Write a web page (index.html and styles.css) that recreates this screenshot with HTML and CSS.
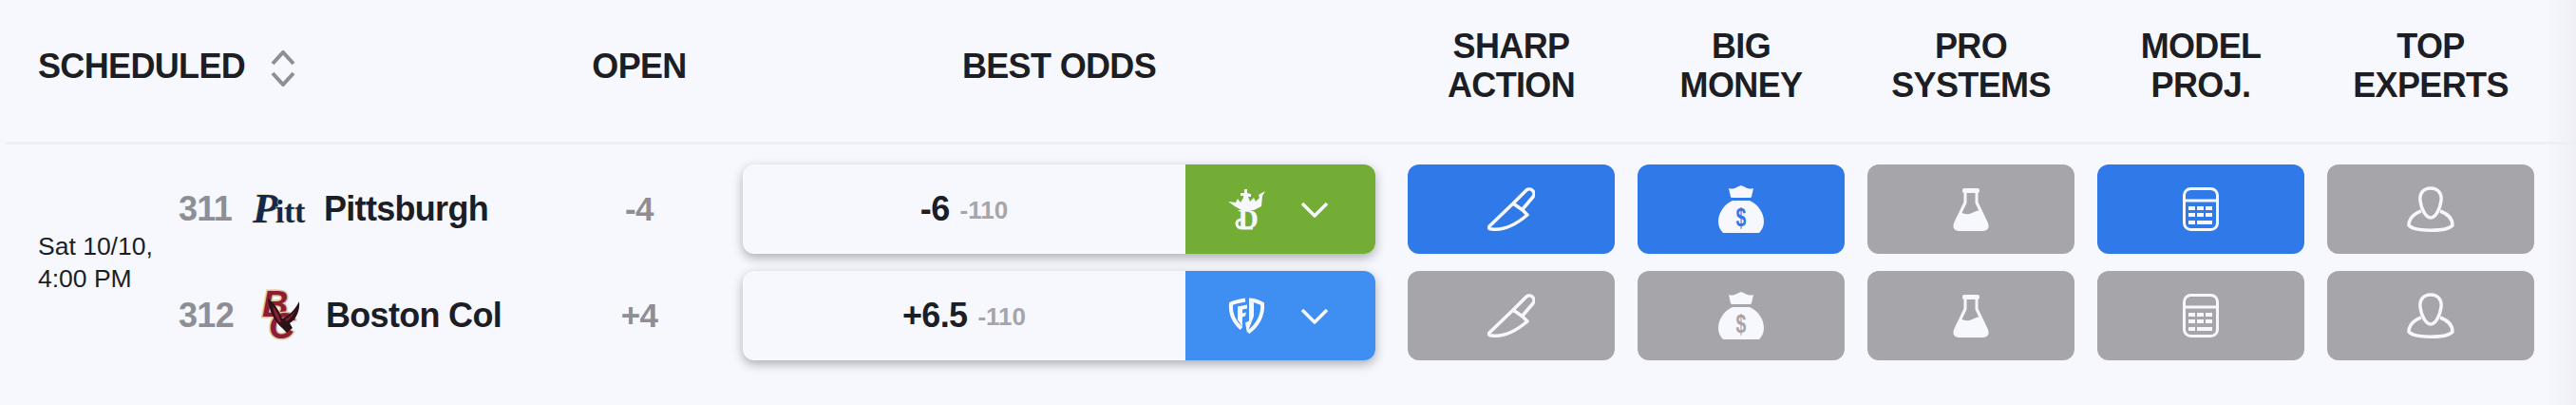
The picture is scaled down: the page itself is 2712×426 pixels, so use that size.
FILE: index.html
```html
<!DOCTYPE html>
<html>

    <head>
        <title>Scheduled games</title>
        <link rel="stylesheet" href="styles.css">
    </head>

    <body>
        <!-- Icons used by more than one cell -->
        <svg class="icon-defs" aria-hidden="true">
            <symbol id="knife" viewBox="0 0 50 46">
                <path class="line" d="M27 17 L41 3 a5 5 0 0 1 7 7 L37 23 M27 17 L2 41 Q0 44 5 44 Q22 46 42 29 L37 24 Z"/>
            </symbol>
            <symbol id="flask" viewBox="0 0 38 46">
                <rect class="solid" x="10" y="1" width="18" height="5" rx="2"/>
                <path class="line thin" d="M13 5 V16 L2.5 38 Q0.5 44.5 6 44.5 H32 Q37.5 44.5 35.5 38 L25 16 V5"/>
                <path class="solid" d="M8 26 Q14 30 20 27 T30 24 L36 40 Q37 45 32 45 H6 Q1 45 2 40 Z"/>
            </symbol>
            <symbol id="calc" viewBox="0 0 38 46">
                <rect class="line thin" x="1.5" y="1.5" width="35" height="43" rx="7"/>
                <path class="line thin" d="M2 14 H36"/>
                <path class="solid" d="M6 20 h7 v4 h-7z M15 20 h7 v4 h-7z M24 20 h7 v4 h-7z M6 27 h7 v4 h-7z M15 27 h7 v4 h-7z M24 27 h7 v4 h-7z M6 35 h7 v4 h-7z M15 35 h16 v4 h-16z"/>
            </symbol>
            <symbol id="person" viewBox="0 0 50 48">
                <path class="line" d="M25 2 C33 2 37 8 36 15 C35 24 30 33 25 33 C20 33 15 24 14 15 C13 8 17 2 25 2 Z"/>
                <path class="line" d="M15 26 C7 29 2 34 2 41 C8 48 42 48 48 41 C48 34 43 29 35 26"/>
            </symbol>
            <symbol id="bag-shape" viewBox="0 0 48 50">
                <path class="solid" d="M11 3 C17 5 20 1 24 0 C28 1 31 5 37 3 L35 12 Q35 13 33 13 H15 Q13 13 13 12 Z"/>
                <path class="solid" d="M15 16 H33 C42 20 48 29 48 38 C48 43 46 47 43 50 H5 C2 47 0 43 0 38 C0 29 6 20 15 16 Z"/>
            </symbol>
            <symbol id="chevron" viewBox="0 0 30 19">
                <path class="line" d="M2 3 L15 16 L28 3"/>
            </symbol>
        </svg>

        <!-- Column titles -->
        <header class="head">
            <div class="head-game">
                <span>SCHEDULED</span>
                <svg class="sort" viewBox="0 0 26 38">
                    <path d="M2 14 L13 2 L24 14 M2 24 L13 36 L24 24"/>
                </svg>
            </div>
            <div class="head-cell">OPEN</div>
            <div class="head-cell head-odds">BEST ODDS</div>
            <div class="head-cell">SHARP<br>ACTION</div>
            <div class="head-cell">BIG<br>MONEY</div>
            <div class="head-cell">PRO<br>SYSTEMS</div>
            <div class="head-cell">MODEL<br>PROJ.</div>
            <div class="head-cell">TOP<br>EXPERTS</div>
        </header>

        <section class="games">
            <div class="date">Sat 10/10,<br>4:00 PM</div>

            <!-- First team -->
            <div class="team">
                <span class="rot">311</span>
                <svg class="logo-pitt" viewBox="0 0 56 32">
                    <text class="pitt-text"><tspan class="pitt-big" x="1" y="30">P</tspan><tspan class="pitt-small" x="25" y="30">itt</tspan></text>
                </svg>
                <span class="name">Pittsburgh</span>
            </div>
            <div class="open">-4</div>
            <div class="odds-wrap">
                <div class="odds">
                    <div class="line-box"><b>-6</b><span class="juice">-110</span></div>
                    <div class="book book-dk">
                        <svg class="book-logo" viewBox="0 0 39 43">
                            <path class="book-white" d="M0 13 L8 14 L10 10 L13 14 L16 9 L16 7 L13 7 L13 4 L17 4 L17 0 L20 0 L20 4 L24 5 L24 8 L21 8 L23 13 L27 9 L29 13 L33 9 L32 6 L39 2 L36 7 L35 18 L27 22 L14 22 L7 18 Z"/>
                            <text class="dk-letter" x="21" y="41" text-anchor="middle">D</text>
                            <path class="dk-swirl" d="M14 32 C7 32 7 41 16 41 H26"/>
                        </svg>
                        <svg class="chevron"><use href="#chevron"/></svg>
                    </div>
                </div>
            </div>
            <div class="pick pick-on"><svg class="icon-knife"><use href="#knife"/></svg></div>
            <div class="pick pick-on">
                <svg class="icon-bag" viewBox="0 0 48 50">
                    <use href="#bag-shape" width="48" height="50"/>
                    <text class="dollar" transform="translate(24 43) scale(.72 1)" text-anchor="middle">$</text>
                </svg>
            </div>
            <div class="pick"><svg class="icon-flask"><use href="#flask"/></svg></div>
            <div class="pick pick-on"><svg class="icon-calc"><use href="#calc"/></svg></div>
            <div class="pick"><svg class="icon-person"><use href="#person"/></svg></div>

            <!-- Second team -->
            <div class="team">
                <span class="rot">312</span>
                <svg class="logo-bc" viewBox="0 0 58 54">
                    <text class="bc-letter"><tspan x="9" y="28">B</tspan><tspan x="16" y="51">C</tspan></text>
                    <path class="bc-eagle" d="M15 9 C21 13 26 20 30 30 C36 28 43 22 48 12 C49 22 45 30 38 35 L41 40 L35 45 L30 40 C22 33 16 22 15 9 Z"/>
                    <path class="bc-wing" d="M20 17 C24 21 27 27 29 34 L27 34 C23 29 21 24 20 17 Z M44 21 C42 26 39 30 35 33 L33 31 C38 29 41 25 44 21 Z"/>
                </svg>
                <span class="name">Boston Col</span>
            </div>
            <div class="open">+4</div>
            <div class="odds-wrap">
                <div class="odds">
                    <div class="line-box"><b>+6.5</b><span class="juice">-110</span></div>
                    <div class="book book-fd">
                        <svg class="book-logo" viewBox="0 0 39 40">
                            <path class="fd-stroke" d="M18 3 C12 4 7 5 3 7 C2 18 7 27 14 33"/>
                            <path class="fd-stroke" d="M22 3 C28 3 32 5 36 7 C37 19 31 30 21 37"/>
                            <path class="book-white" d="M10 10 L20 8 L20 12 L15 13 L15 17 L19 16 L18 20 L15 21 L15 31 L10 24 Z"/>
                            <path class="book-white" d="M22 4 L27 6 L27 20 L24 28 L20 38 L18 27 L22 25 Z"/>
                        </svg>
                        <svg class="chevron"><use href="#chevron"/></svg>
                    </div>
                </div>
            </div>
            <div class="pick"><svg class="icon-knife"><use href="#knife"/></svg></div>
            <div class="pick">
                <svg class="icon-bag" viewBox="0 0 48 50">
                    <use href="#bag-shape" width="48" height="50"/>
                    <text class="dollar" transform="translate(24 43) scale(.72 1)" text-anchor="middle">$</text>
                </svg>
            </div>
            <div class="pick"><svg class="icon-flask"><use href="#flask"/></svg></div>
            <div class="pick"><svg class="icon-calc"><use href="#calc"/></svg></div>
            <div class="pick"><svg class="icon-person"><use href="#person"/></svg></div>
        </section>
    </body>

</html>
```

FILE: styles.css
```css
body {
    margin: 0;
    height: 426px;
    overflow: hidden;
    font-family: "Liberation Sans", Arial, sans-serif;
    color: #1d1e24;
    background: linear-gradient(to right, rgba(230, 230, 236, 0) 2680px, rgba(230, 230, 236, 0.5) 2712px), #f7f8fd;
}

.icon-defs {
    position: absolute;
    width: 0;
    height: 0;
}

/* Header */
.head {
    display: grid;
    grid-template-columns: 524px 170px 676px repeat(5, 218px);
    column-gap: 24px;
    align-items: center;
    box-sizing: border-box;
    height: 152px;
    margin-left: 6px;
    padding: 0 0 11px 34px;
    border-bottom: 3px solid #eeeff4;
    font-size: 36px;
    font-weight: bold;
    letter-spacing: -0.65px;
    line-height: 41px;
}

.head-game {
    display: flex;
    align-items: center;
    gap: 27px;
}

.head-cell {
    text-align: center;
}

.head-odds {
    padding-right: 10px;
}

.sort {
    width: 26px;
    height: 38px;
    margin-top: 5px;
    fill: none;
    stroke: #8f8e94;
    stroke-width: 4;
}

/* Game rows */
.games {
    display: grid;
    grid-template-columns: 124px 376px 170px 676px repeat(5, 218px);
    grid-template-rows: 94px 94px;
    gap: 18px 24px;
    padding: 21px 0 0 40px;
}

.date {
    grid-row: 1 / 3;
    align-self: center;
    font-size: 26.5px;
    line-height: 34px;
}

.team {
    display: flex;
    align-items: center;
    font-size: 36px;
    font-weight: bold;
    letter-spacing: -0.7px;
}

.rot {
    width: 77px;
    color: #8f8e94;
}

.name {
    margin-left: 20px;
}

.logo-pitt,
.logo-bc {
    overflow: visible;
}

.logo-pitt {
    width: 56px;
    height: 32px;
}

.logo-bc {
    width: 58px;
    height: 54px;
    margin: 0 -2px 0 2px;
}

.pitt-text {
    font-family: "Liberation Serif", serif;
    font-weight: bold;
    letter-spacing: 0;
    fill: #12294b;
    stroke: #d9cfa6;
    stroke-width: 1;
    paint-order: stroke;
}

.pitt-big {
    font-size: 44px;
    font-style: italic;
}

.pitt-small {
    font-size: 33px;
    font-style: normal;
}

.bc-letter {
    font-family: "Liberation Sans", sans-serif;
    font-size: 38px;
    font-weight: bold;
    font-style: italic;
    letter-spacing: 0;
    fill: #8e1c35;
    stroke: #dccb9c;
    stroke-width: 3;
    paint-order: stroke;
}

.bc-eagle {
    fill: #2b1216;
}

.bc-wing {
    fill: #8e1c35;
}

.open {
    align-self: center;
    text-align: center;
    font-size: 35px;
    font-weight: bold;
    letter-spacing: -0.6px;
    color: #8f8e94;
}

/* Best odds card */
.odds-wrap {
    padding-right: 10px;
}

.odds {
    display: flex;
    height: 94px;
    overflow: hidden;
    border-radius: 12px;
    box-shadow: 0 4px 11px rgba(60, 60, 75, 0.4);
}

.line-box {
    flex: 1;
    display: flex;
    justify-content: center;
    align-items: center;
    gap: 11px;
    font-size: 36px;
    letter-spacing: -0.65px;
}

.juice {
    margin-top: 2px;
    font-size: 26px;
    font-weight: bold;
    letter-spacing: 0;
    color: #a6a5aa;
}

.book {
    display: flex;
    align-items: center;
    width: 200px;
    padding-left: 45px;
    box-sizing: border-box;
}

.book-dk {
    background-color: #74ad36;
}

.book-fd {
    background-color: #3f8ef1;
}

.book-logo {
    width: 39px;
    height: 43px;
    margin-right: 37px;
    overflow: visible;
}

.book-white {
    fill: #f7f8fd;
}

.dk-letter {
    font-family: "Liberation Serif", serif;
    font-size: 30px;
    font-weight: bold;
    fill: #f7f8fd;
}

.dk-swirl,
.fd-stroke {
    fill: none;
    stroke: #f7f8fd;
    stroke-width: 3;
}

.fd-stroke {
    stroke-width: 4;
}

.chevron {
    width: 30px;
    height: 19px;
}

/* Signal buttons */
.pick {
    --cut: #a6a5aa;
    display: flex;
    justify-content: center;
    align-items: center;
    border-radius: 12px;
    background-color: #a6a5aa;
}

.pick-on {
    --cut: #3079e8;
    background-color: #3079e8;
}

.line {
    fill: none;
    stroke: #f7f8fd;
    stroke-width: 3.5;
    stroke-linejoin: round;
}

.thin {
    stroke-width: 3;
}

.solid {
    fill: #f7f8fd;
}

.dollar {
    fill: var(--cut);
    font-size: 27px;
    font-weight: bold;
}

.icon-knife {
    width: 50px;
    height: 46px;
}

.icon-bag {
    width: 48px;
    height: 50px;
    overflow: visible;
}

.icon-flask {
    width: 38px;
    height: 46px;
}

.icon-calc {
    width: 38px;
    height: 46px;
}

.icon-person {
    width: 50px;
    height: 48px;
}
```
